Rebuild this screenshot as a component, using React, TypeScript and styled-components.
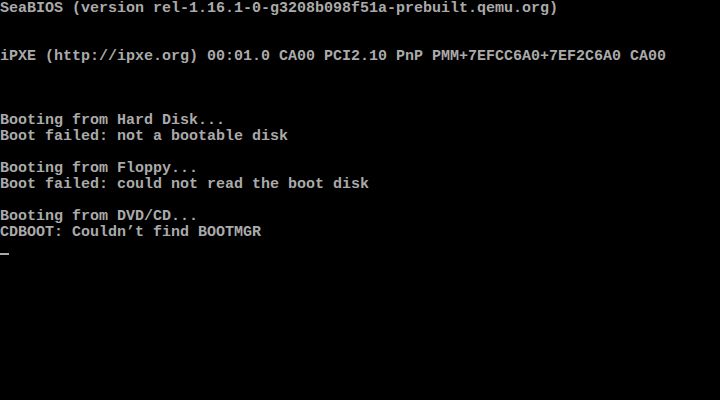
import React from "react";
import styled, { createGlobalStyle } from "styled-components";

const Global = createGlobalStyle`
  html, body { margin: 0; padding: 0; background: #000; }
  body { width: 720px; height: 400px; overflow: hidden; }
`;

const Screen = styled.div`
  width: 720px;
  height: 400px;
  background: #000;
  color: #aaaaaa;
  font-family: "Liberation Mono", "DejaVu Sans Mono", monospace;
  font-size: 15px;
  font-weight: bold;
  display: flex;
  flex-direction: column;
`;

const Row = styled.div`
  box-sizing: border-box;
  height: 16px;
  padding-top: 1px;
  line-height: 16px;
  white-space: pre;
`;

const CursorRow = styled.div`
  height: 16px;
  display: flex;
  align-items: flex-start;
`;

const Cursor = styled.span`
  display: block;
  width: 9px;
  height: 2px;
  margin-top: 13px;
  background: #aaaaaa;
`;

const lines = [
  "SeaBIOS (version rel-1.16.1-0-g3208b098f51a-prebuilt.qemu.org)",
  "",
  "",
  "iPXE (http://ipxe.org) 00:01.0 CA00 PCI2.10 PnP PMM+7EFCC6A0+7EF2C6A0 CA00",
  "",
  "",
  "",
  "Booting from Hard Disk...",
  "Boot failed: not a bootable disk",
  "",
  "Booting from Floppy...",
  "Boot failed: could not read the boot disk",
  "",
  "Booting from DVD/CD...",
  "CDBOOT: Couldn\u2019t find BOOTMGR",
];

export default function App() {
  return (
    <>
      <Global />
      <Screen>
        {lines.map((l, i) => (
          <Row key={i}>{l}</Row>
        ))}
        <CursorRow>
          <Cursor />
        </CursorRow>
      </Screen>
    </>
  );
}
